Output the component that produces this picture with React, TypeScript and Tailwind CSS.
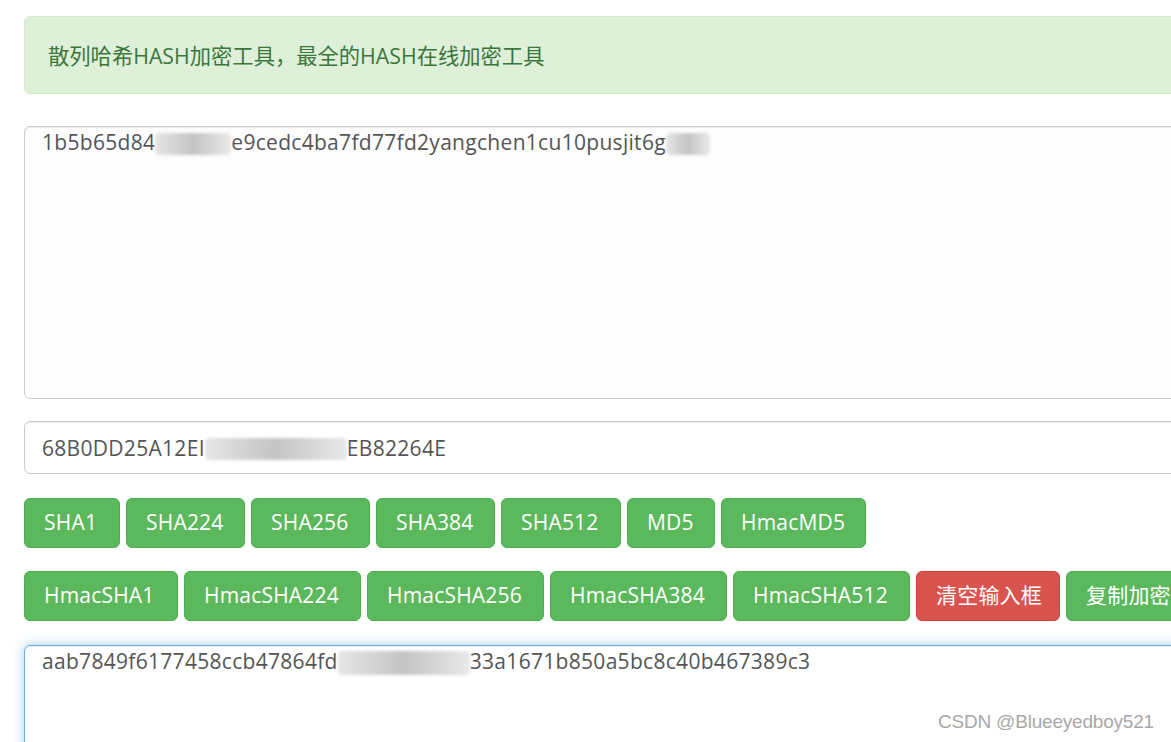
import React from 'react';

const font = { fontFamily: '"Open Sans", "Noto Sans CJK SC", sans-serif' };

const Mosaic: React.FC<{ className: string }> = ({ className }) => (
  <span
    className={`inline-block align-middle rounded-sm bg-gradient-to-r from-[#e6e6e6] via-[#c4c4c4] to-[#e9e9e9] blur-[1.5px] ${className}`}
  ></span>
);

const rowOne = [
  { label: 'SHA1', w: 'w-[96px]' },
  { label: 'SHA224', w: 'w-[119px]' },
  { label: 'SHA256', w: 'w-[119px]' },
  { label: 'SHA384', w: 'w-[119px]' },
  { label: 'SHA512', w: 'w-[120px]' },
  { label: 'MD5', w: 'w-[88px]' },
  { label: 'HmacMD5', w: 'w-[145px]' },
];

const rowTwo = [
  { label: 'HmacSHA1', w: 'w-[154px]', danger: false },
  { label: 'HmacSHA224', w: 'w-[177px]', danger: false },
  { label: 'HmacSHA256', w: 'w-[177px]', danger: false },
  { label: 'HmacSHA384', w: 'w-[177px]', danger: false },
  { label: 'HmacSHA512', w: 'w-[177px]', danger: false },
  { label: '清空输入框', w: 'w-[144px]', danger: true },
  { label: '复制加密结果', w: 'w-[170px]', danger: false },
];

const Btn: React.FC<{ label: string; w: string; danger?: boolean }> = ({ label, w, danger }) => (
  <button
    className={`${w} shrink-0 h-[50px] rounded-[6px] border text-[21px] tracking-[0.2px] text-white text-left pl-[19px] whitespace-nowrap overflow-hidden ${
      danger ? 'bg-[#d9534f] border-[#d43f3a]' : 'bg-[#5cb85c] border-[#4cae4c]'
    }`}
  >
    {label}
  </button>
);

const App: React.FC = () => {
  return (
    <div className="w-[1171px] h-[742px] overflow-hidden bg-white relative" style={font}>
      <div className="w-[1300px] pl-[24px] pt-[16px] flex flex-col">
        {/* Title alert */}
        <div className="h-[78px] bg-[#dff0d8] border border-[#d6e9c6] rounded-[6px] px-[23px] pt-[1px] flex items-center text-[21.3px] text-[#3c763d]">
          散列哈希HASH加密工具，最全的HASH在线加密工具
        </div>

        {/* Input text */}
        <div className="mt-[32px] h-[273px] border border-[#ccc] rounded-[6px] bg-[#fdfdfd] shadow-[inset_0_1px_1px_rgba(0,0,0,0.075)] px-[17px] pt-[1px] text-[21px] leading-[28px] tracking-[0.3px] text-[#555] whitespace-nowrap">
          1b5b65d84<Mosaic className="w-[76px] h-[22px]" />e9cedc4ba7fd77fd2yangchen1cu10pusjit6g
          <Mosaic className="w-[44px] h-[22px]" />
        </div>

        {/* Key input */}
        <div className="mt-[22px] h-[53px] border border-[#ccc] rounded-[6px] bg-white shadow-[inset_0_1px_1px_rgba(0,0,0,0.075)] px-[17px] pt-[2px] flex items-center text-[21px] tracking-[0.3px] text-[#555] whitespace-nowrap">
          68B0DD25A12EI<Mosaic className="w-[142px] h-[22px]" />EB82264E
        </div>

        {/* Buttons */}
        <div className="mt-[24px] flex gap-[6px]">
          {rowOne.map((b) => (
            <Btn key={b.label} label={b.label} w={b.w} />
          ))}
        </div>
        <div className="mt-[23px] flex gap-[6px]">
          {rowTwo.map((b) => (
            <Btn key={b.label} label={b.label} w={b.w} danger={b.danger} />
          ))}
        </div>

        {/* Output */}
        <div className="mt-[24px] h-[140px] border border-[#66afe9] rounded-[6px] bg-white shadow-[inset_0_1px_1px_rgba(0,0,0,0.075),0_0_12px_rgba(102,175,233,0.6)] px-[17px] pt-[1px] text-[21px] leading-[28px] tracking-[0.3px] text-[#555] whitespace-nowrap">
          aab7849f6177458ccb47864fd<Mosaic className="w-[132px] h-[24px]" />33a1671b850a5bc8c40b467389c3
        </div>
      </div>

      {/* Watermark */}
      <div
        className="absolute left-[938px] top-[708px] text-[19px] text-[#a8a8a8] tracking-[-0.2px]"
        style={{ fontFamily: '"Liberation Sans", sans-serif' }}
      >
        CSDN @Blueeyedboy521
      </div>
    </div>
  );
};

export default App;
